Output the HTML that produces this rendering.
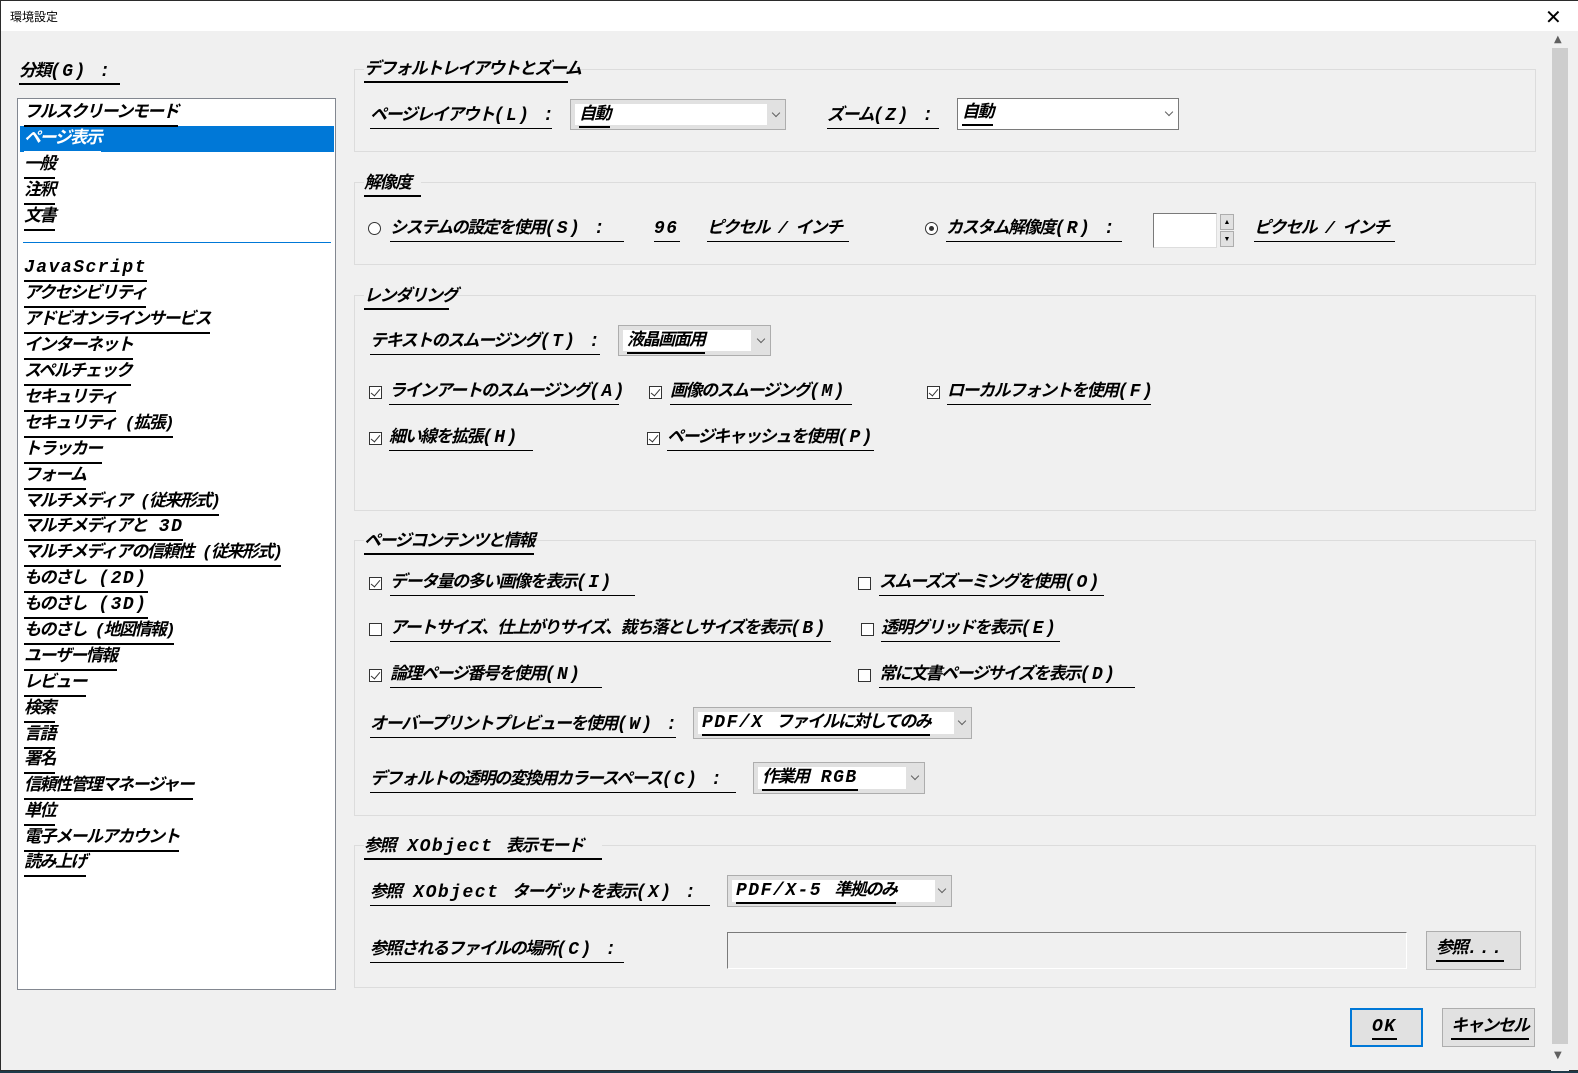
<!DOCTYPE html>
<html><head><meta charset="utf-8">
<style>
*{margin:0;padding:0;box-sizing:border-box}
html,body{width:1578px;height:1073px;overflow:hidden;background:#1d3a4a}
#win{position:absolute;left:0;top:0;width:1578px;height:1071px;background:#f0f0f0;border:1px solid #2b2b2b;border-top:none;border-right:none}
#title{position:absolute;left:0;top:0;width:1578px;height:31px;background:#fff;border-top:1px solid #2b2b2b}
#title span{position:absolute;left:9px;top:7px;font:12px "Liberation Sans","Noto Sans CJK JP",sans-serif;color:#000}
#close{position:absolute;left:1544px;top:4px;font:20px "Liberation Sans",sans-serif;color:#000}
.t{position:absolute;font:italic bold 17px "Liberation Mono","Noto Sans CJK JP",sans-serif;color:#000;white-space:nowrap;line-height:22px;height:27px;padding-top:4px;border-bottom:1px solid #000;letter-spacing:-1.5px}
.l{font-size:18px;letter-spacing:1.5px;line-height:18px}
.b2{border-bottom:2px solid #000}
.grp{position:absolute;border:1px solid #dcdcdc}
#list{position:absolute;left:16px;top:98px;width:319px;height:892px;background:#fff;border:1px solid #828790}
.li{position:absolute;left:6px;font:italic bold 17px "Liberation Mono","Noto Sans CJK JP",sans-serif;line-height:22px;height:27px;padding-top:3px;border-bottom:2px solid #000;white-space:nowrap;letter-spacing:-1.5px}
.dd{position:absolute;background:#e1e1e1;border:1px solid #adadad}
.dd .in{position:absolute;left:4px;top:4px;bottom:4px;background:#fff}
.dd .ar{position:absolute;right:6px;top:50%;width:6px;height:6px;margin-top:-5px;border-right:1px solid #606060;border-bottom:1px solid #606060;transform:rotate(45deg)}
.dd .t{height:24px;padding-top:1px;border-bottom:2px solid #000}
.cb{position:absolute;width:13px;height:13px;border:1px solid #333;background:#fff}
.cb.on::after{content:"";position:absolute;left:3px;top:0px;width:4px;height:8px;border-right:1px solid #333;border-bottom:1px solid #333;transform:rotate(40deg)}
.rb{position:absolute;width:13px;height:13px;border:1px solid #333;border-radius:50%;background:#fff}
.rb.on::after{content:"";position:absolute;left:3px;top:3px;width:5px;height:5px;border-radius:50%;background:#333}
.btn{position:absolute;background:#e1e1e1;border:1px solid #adadad}
</style></head><body>
<div id="win">
<div id="title"><span>環境設定</span><div id="close">✕</div></div>

<div style="position:absolute;left:1550px;top:31px;width:18px;height:1040px;background:#f0f0f0"></div>
<div style="position:absolute;left:1551px;top:48px;width:16px;height:996px;background:#cdcdcd"></div>
<div style="position:absolute;left:1553px;top:34px;font:10px 'DejaVu Sans',sans-serif;color:#606060">▲</div>
<div style="position:absolute;left:1553px;top:1050px;font:10px 'DejaVu Sans',sans-serif;color:#606060">▼</div>

<div class="t b2" style="left:18px;top:58px;width:101px">分類<span class="l">(G) :</span></div>
<div id="list">
<div style="position:absolute;left:2px;top:27px;width:314px;height:26px;background:#0078d7"></div>
<div class="li" style="top:1px">フルスクリーンモード</div>
<div class="li" style="top:27px;color:#fff;border-color:#fff">ページ表示</div>
<div class="li" style="top:53px">一般</div>
<div class="li" style="top:79px">注釈</div>
<div class="li" style="top:105px">文書</div>
<div style="position:absolute;left:5px;top:143px;width:308px;height:1px;background:#0078d7"></div>
<div class="li" style="top:156px"><span class="l">JavaScript</span></div>
<div class="li" style="top:182px">アクセシビリティ</div>
<div class="li" style="top:208px">アドビオンラインサービス</div>
<div class="li" style="top:234px">インターネット</div>
<div class="li" style="top:260px">スペルチェック</div>
<div class="li" style="top:286px">セキュリティ</div>
<div class="li" style="top:312px">セキュリティ (拡張)</div>
<div class="li" style="top:338px">トラッカー</div>
<div class="li" style="top:364px">フォーム</div>
<div class="li" style="top:390px">マルチメディア (従来形式)</div>
<div class="li" style="top:415px">マルチメディアと<span class="l"> 3D</span></div>
<div class="li" style="top:441px">マルチメディアの信頼性 (従来形式)</div>
<div class="li" style="top:467px">ものさし<span class="l"> (2D)</span></div>
<div class="li" style="top:493px">ものさし<span class="l"> (3D)</span></div>
<div class="li" style="top:519px">ものさし (地図情報)</div>
<div class="li" style="top:545px">ユーザー情報</div>
<div class="li" style="top:571px">レビュー</div>
<div class="li" style="top:597px">検索</div>
<div class="li" style="top:623px">言語</div>
<div class="li" style="top:648px">署名</div>
<div class="li" style="top:674px">信頼性管理マネージャー</div>
<div class="li" style="top:700px">単位</div>
<div class="li" style="top:726px">電子メールアカウント</div>
<div class="li" style="top:751px">読み上げ</div>
</div>

<div class="grp" style="left:353px;top:69px;width:1182px;height:83px"></div>
<div class="grp" style="left:353px;top:182px;width:1182px;height:83px"></div>
<div class="grp" style="left:353px;top:295px;width:1182px;height:216px"></div>
<div class="grp" style="left:353px;top:540px;width:1182px;height:276px"></div>
<div class="grp" style="left:353px;top:845px;width:1182px;height:143px"></div>

<div class="t b2" style="left:363px;top:56px;width:204px;background:#f0f0f0">デフォルトレイアウトとズーム</div>
<div class="t b2" style="left:363px;top:170px;width:57px;background:#f0f0f0">解像度</div>
<div class="t b2" style="left:363px;top:283px;width:85px;background:#f0f0f0">レンダリング</div>
<div class="t b2" style="left:363px;top:528px;width:170px;background:#f0f0f0">ページコンテンツと情報</div>
<div class="t b2" style="left:363px;top:833px;width:238px;background:#f0f0f0">参照<span class="l"> XObject </span>表示モード</div>

<div class="t" style="left:369px;top:102px;width:182px">ページレイアウト<span class="l">(L) :</span></div>
<div class="dd" style="left:569px;top:99px;width:216px;height:31px"><div class="in" style="width:192px"><div class="t" style="left:4px;top:0px">自動</div></div><div class="ar"></div></div>
<div class="t" style="left:826px;top:102px;width:112px">ズーム<span class="l">(Z) :</span></div>
<div class="dd" style="left:956px;top:98px;width:222px;height:32px;background:#fff;border-color:#7a7a7a"><div class="t" style="left:4px;top:3px">自動</div><div class="ar"></div></div>

<div class="rb" style="left:367px;top:222px"></div>
<div class="t" style="left:389px;top:215px;width:234px">システムの設定を使用<span class="l">(S) :</span></div>
<div class="t" style="left:653px;top:215px;width:26px"><span class="l">96</span></div>
<div class="t" style="left:706px;top:215px;width:142px">ピクセル / インチ</div>
<div class="rb on" style="left:924px;top:222px"></div>
<div class="t" style="left:945px;top:215px;width:176px">カスタム解像度<span class="l">(R) :</span></div>
<div style="position:absolute;left:1152px;top:213px;width:64px;height:35px;background:#fff;border:1px solid #7a7a7a;border-right-color:#ddd;border-bottom-color:#ddd"></div>
<div class="btn" style="left:1219px;top:214px;width:14px;height:16px;font-size:7px;text-align:center;line-height:14px">▲</div>
<div class="btn" style="left:1219px;top:231px;width:14px;height:16px;font-size:7px;text-align:center;line-height:14px">▼</div>
<div class="t" style="left:1253px;top:215px;width:141px">ピクセル / インチ</div>

<div class="t" style="left:369px;top:328px;width:230px">テキストのスムージング<span class="l">(T) :</span></div>
<div class="dd" style="left:617px;top:325px;width:153px;height:31px"><div class="in" style="width:128px"><div class="t" style="left:4px;top:0px">液晶画面用</div></div><div class="ar"></div></div>
<div class="cb on" style="left:368px;top:386px"></div>
<div class="t" style="left:388px;top:378px;width:230px">ラインアートのスムージング<span class="l">(A)</span></div>
<div class="cb on" style="left:648px;top:386px"></div>
<div class="t" style="left:669px;top:378px;width:182px">画像のスムージング<span class="l">(M)</span></div>
<div class="cb on" style="left:926px;top:386px"></div>
<div class="t" style="left:946px;top:378px;width:204px">ローカルフォントを使用<span class="l">(F)</span></div>
<div class="cb on" style="left:368px;top:432px"></div>
<div class="t" style="left:388px;top:424px;width:144px">細い線を拡張<span class="l">(H)</span></div>
<div class="cb on" style="left:646px;top:432px"></div>
<div class="t" style="left:666px;top:424px;width:207px">ページキャッシュを使用<span class="l">(P)</span></div>

<div class="cb on" style="left:368px;top:577px"></div>
<div class="t" style="left:389px;top:569px;width:245px">データ量の多い画像を表示<span class="l">(I)</span></div>
<div class="cb" style="left:857px;top:577px"></div>
<div class="t" style="left:878px;top:569px;width:225px">スムーズズーミングを使用<span class="l">(O)</span></div>
<div class="cb" style="left:368px;top:623px"></div>
<div class="t" style="left:389px;top:615px;width:441px">アートサイズ、仕上がりサイズ、裁ち落としサイズを表示<span class="l">(B)</span></div>
<div class="cb" style="left:860px;top:623px"></div>
<div class="t" style="left:880px;top:615px;width:179px">透明グリッドを表示<span class="l">(E)</span></div>
<div class="cb on" style="left:368px;top:669px"></div>
<div class="t" style="left:389px;top:661px;width:212px">論理ページ番号を使用<span class="l">(N)</span></div>
<div class="cb" style="left:857px;top:669px"></div>
<div class="t" style="left:878px;top:661px;width:256px">常に文書ページサイズを表示<span class="l">(D)</span></div>
<div class="t" style="left:369px;top:711px;width:306px">オーバープリントプレビューを使用<span class="l">(W) :</span></div>
<div class="dd" style="left:692px;top:707px;width:279px;height:32px"><div class="in" style="width:256px"><div class="t" style="left:4px;top:0px"><span class="l">PDF/X </span>ファイルに対してのみ</div></div><div class="ar"></div></div>
<div class="t" style="left:369px;top:766px;width:366px">デフォルトの透明の変換用カラースペース<span class="l">(C) :</span></div>
<div class="dd" style="left:752px;top:762px;width:172px;height:32px"><div class="in" style="width:148px"><div class="t" style="left:4px;top:0px">作業用<span class="l"> RGB</span></div></div><div class="ar"></div></div>

<div class="t" style="left:369px;top:879px;width:340px">参照<span class="l"> XObject </span>ターゲットを表示<span class="l">(X) :</span></div>
<div class="dd" style="left:726px;top:875px;width:225px;height:32px"><div class="in" style="width:203px"><div class="t" style="left:4px;top:0px"><span class="l">PDF/X-5 </span>準拠のみ</div></div><div class="ar"></div></div>
<div class="t" style="left:369px;top:936px;width:254px">参照されるファイルの場所<span class="l">(C) :</span></div>
<div style="position:absolute;left:726px;top:932px;width:680px;height:37px;background:#f0f0f0;border:1px solid #7a7a7a;border-right-color:#fff;border-bottom-color:#fff"></div>
<div class="btn" style="left:1425px;top:931px;width:95px;height:39px"><div class="t" style="left:9px;top:3px;border-bottom:2px solid #000">参照<span class="l">...</span></div></div>

<div class="btn" style="left:1349px;top:1008px;width:73px;height:39px;border:2px solid #0078d7"><div class="t" style="left:20px;top:3px;border-bottom:2px solid #000"><span class="l">OK</span></div></div>
<div class="btn" style="left:1441px;top:1008px;width:93px;height:39px"><div class="t" style="left:8px;top:4px;border-bottom:2px solid #000">キャンセル</div></div>
</div>
</body></html>
